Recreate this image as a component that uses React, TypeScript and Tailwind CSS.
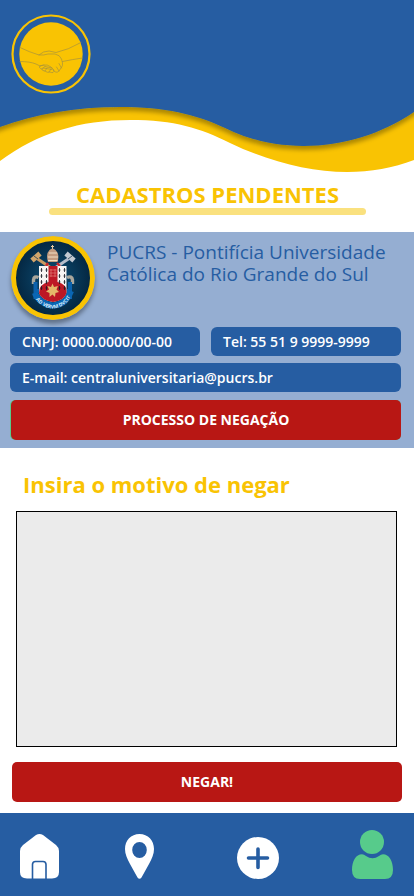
import React from 'react';

interface PillProps {
  children: React.ReactNode;
  className?: string;
}

const HandshakeLogo = () => (
  <svg viewBox="0 0 80 80" className="relative block h-20 w-20" fill="none" role="img" aria-label="Logo">
    <circle cx="40" cy="40" r="38.5" stroke="#f9c303" strokeWidth="2.2" />
    <circle cx="40" cy="40" r="31.7" fill="#f9c303" />
    <g stroke="#a8923c" strokeWidth="0.7" strokeLinecap="round" strokeLinejoin="round">
      <path d="M9 33.5 Q18 38 28 41 Q32 37 38 37 L45 38.5 Q57 36 70 28.5" />
      <path d="M9 47.5 Q19 47.5 25 50 L29 52" />
      <path d="M28 41 Q33 41.5 37 40 L44 40 Q49 41 50.5 45 L51.5 49 Q52 52 50 54 L48 57 Q45 60 42 56" />
      <path d="M51.5 47.5 Q61 45.5 71.5 44" />
      <path d="M29 52 Q27 54 31 55 Q31 57 34 57 Q36 59 39 58 Q43 60 43 56 L40 53 Q36 50 33 51 Z" />
      <path d="M31 55 L34 52.5 M34 57 L36 54 M38 58 L40 55 M48 57 L45.5 53 M50.5 54 L48 49.5 M33 51 L29 52" />
      <path d="M32 54 L41 55.5 M34 52.5 L41 54" />
    </g>
  </svg>
);

const Waves = () => (
  <svg
    viewBox="0 0 414 173"
    preserveAspectRatio="none"
    className="absolute inset-0 h-full w-full"
    aria-hidden="true"
  >
    <defs>
      <filter id="wave-shadow" x="-5%" y="-5%" width="110%" height="115%">
        <feDropShadow dx="0" dy="4" stdDeviation="2" floodColor="#000" floodOpacity="0.3" />
      </filter>
    </defs>
    <path
      d="M0 0 H414 V160 C360 181 295 174 230 143 C200 128 175 120 130 120 C80 120 38 133 0 161 Z"
      fill="#f9c303"
    />
    <path
      d="M-10 -10 H424 V105 L414 112 C360 149 285 158 225 128 C195 114 165 107 120 107 C75 107 35 114 0 127 L-10 131 Z"
      fill="#265da2"
      filter="url(#wave-shadow)"
    />
  </svg>
);

const Ermine = ({ x }: { x: number }) => (
  <g stroke="#1c1c24" strokeWidth="0.8">
    {[34, 40, 46, 52].map((y) => (
      <path key={y} d={`M${x} ${y - 2} V${y + 2} M${x - 1} ${y} H${x + 1} M${x + 5} ${y - 2} V${y + 2} M${x + 4} ${y} H${x + 6}`} />
    ))}
  </g>
);

const Crest = () => (
  <svg viewBox="0 0 84 84" className="block h-[84px] w-[84px] shrink-0 rounded-full shadow-[0_4px_4px_rgba(0,0,0,0.35)]" role="img" aria-label="Brasão da PUCRS">
    <defs>
      <radialGradient id="crest-bg">
        <stop offset="0" stopColor="#0c5078" />
        <stop offset="1" stopColor="#04253f" />
      </radialGradient>
      <clipPath id="crest-shield">
        <path d="M28 30 H55.5 V57 Q54 64 42 66 Q30 64 28 57 Z" />
      </clipPath>
      <path id="crest-motto" d="M22.5 58.5 Q24 63 28 67 Q42 78 55 67 Q60 62 61.5 56" />
    </defs>
    <circle cx="42" cy="42" r="39.5" fill="url(#crest-bg)" stroke="#f9c303" strokeWidth="5" />
    {/* keys */}
    <g fill="none">
      <path d="M26 22.5 L46 36" stroke="#c99a61" strokeWidth="3" />
      <path d="M21 24.5 L29 17.5" stroke="#d3a56b" strokeWidth="5" />
      <path d="M58 22.5 L38 36" stroke="#b5bdca" strokeWidth="3" />
      <path d="M55 17.5 L63 24.5" stroke="#c2c9d2" strokeWidth="5" />
      <path d="M23 20 L27 23 M61 20 L57 23" stroke="#1d3a51" strokeWidth="0.8" />
    </g>
    {/* tiara */}
    <path d="M37 26 Q34.5 18 38.5 14 Q41.5 11 44.5 14 Q49 18 46.5 26 Z" fill="#c49c80" />
    <path d="M41.5 9 V13 M40 10.5 H43" stroke="#e4c8a0" strokeWidth="1" />
    <path d="M38 17 H46 M37 21 H47 M37 24.5 H46.5" stroke="#f2dfc5" strokeWidth="1" />
    <path d="M37 27 L35 30 M46 27 L49 30" stroke="#c7282d" strokeWidth="2.4" />
    {/* supporters */}
    <g fill="none">
      <path d="M22.5 48 V44 Q23 39.5 27.5 41.5 M61.5 48 V44 Q61 39.5 56 41.5" stroke="#aaa79c" strokeWidth="3.4" />
      <path d="M24.5 46 V63 M59 46 V63" stroke="#0c62ad" strokeWidth="4" />
      <path d="M24 55 H28 M56 55 H60" stroke="#0c62ad" strokeWidth="4" />
    </g>
    <g clipPath="url(#crest-shield)">
      <path d="M28 30 H56 V67 H28 Z" fill="#f8f5f3" />
      <path d="M37.5 30 H46.5 V46 Q56 48 56 57 V67 H28 V57 Q28 48 37.5 46 Z" fill="#bd1825" />
      <Ermine x={30.5} />
      <Ermine x={48.5} />
      <path d="M38.5 34 H45.5 M38.5 37 H45.5 M38.5 40 H45.5 M40 33 V41 M44 33 V41" stroke="#df7370" strokeWidth="0.8" />
    </g>
    <path d="M41.5 47.5 L43 51 L47 50 L45.5 53.5 L48 56 L44.5 57 L44 61 L41.5 58.5 L38.5 61 L38.5 57 L35 55.5 L38 53.5 L36.5 50 L40 51 Z" fill="#e5b869" />
    <path d="M24 57 Q25 61 30 65 Q42 74 54 65 Q58 61 60 55" stroke="#0a66b4" strokeWidth="6" fill="none" />
    <text fontSize="5" fontWeight="700" fill="#d5eafa">
      <textPath href="#crest-motto" startOffset="50%" textAnchor="middle">AD VERVM DVCIT</textPath>
    </text>
  </svg>
);

const Pill = ({ children, className = '' }: PillProps) => (
  <p className={`rounded-md bg-[#265da2] pl-3 text-sm leading-[29px] font-semibold text-white ${className}`}>{children}</p>
);

const navItems = [
  {
    label: 'Início',
    className: '',
    icon: (
      <svg viewBox="0 0 39 45" className="block h-[45px] w-[39px]" fill="none">
        <path d="M16 1 Q19.5 -1 23 1 L36 11 Q39 13.5 39 17 V38 Q39 44.5 32 44.5 H7 Q0 44.5 0 38 V17 Q0 13.5 3 11 Z" fill="#fff" />
        <path d="M12.5 45 V30.5 Q12.5 27.5 15.5 27.5 H23 Q26 27.5 26 30.5 V45" stroke="#265da2" strokeWidth="1.6" />
      </svg>
    ),
  },
  {
    label: 'Mapa',
    className: 'mr-4',
    icon: (
      <svg viewBox="0 0 29 45" className="block h-[45px] w-[29px]">
        <path
          d="M14.5 0 C6 0 0 6.5 0 15 C0 20 2 24.5 5 30 L12.5 43.5 Q14.5 46 16.5 43.5 L24 30 C27 24.5 29 20 29 15 C29 6.5 23 0 14.5 0 Z M14.5 8 A7.3 8 0 1 1 14.5 24 A7.3 8 0 1 1 14.5 8 Z"
          fill="#fff"
          fillRule="evenodd"
        />
      </svg>
    ),
  },
  {
    label: 'Adicionar',
    className: 'mr-[7px]',
    icon: (
      <svg viewBox="0 0 42 42" className="block h-[42px] w-[42px]">
        <circle cx="21" cy="21" r="21" fill="#fff" />
        <path d="M21 12 V30.5 M11.5 21 H30.5" stroke="#265da2" strokeWidth="3.6" strokeLinecap="round" />
      </svg>
    ),
  },
  {
    label: 'Perfil',
    className: '',
    icon: (
      <svg viewBox="0 0 41 49" className="block h-[49px] w-[41px]" fill="#57cb8b">
        <circle cx="20" cy="12" r="12" />
        <path d="M10 24.3 Q12 24.3 14 26 Q20.5 30.5 27 26 Q29 24.3 31 24.3 C37 24.3 41 31 41 40 Q41 49 33 49 H8 Q0 49 0 40 C0 31 4 24.3 10 24.3 Z" />
      </svg>
    ),
  },
];

const App = () => {
  return (
    <div className="flex min-h-screen flex-col bg-white font-['Open_Sans',sans-serif]">
      <header className="relative h-[173px] pt-[14px] pl-[11px]">
        <Waves />
        <HandshakeLogo />
      </header>

      <main className="flex flex-1 flex-col">
        <div className="mt-[7px] mr-12 ml-[49px] flex flex-col items-center">
          <h1 className="text-[22px] leading-7 font-bold text-[#f9c303]">CADASTROS PENDENTES</h1>
          <div className="h-[7px] w-full rounded-full bg-[#fae17f]"></div>
        </div>

        <section className="mt-[17px] bg-[#95aed2] px-[10px] pt-1 pb-2">
          <div className="flex gap-3 pl-px">
            <Crest />
            <h2 className="pt-[5px] text-[19px] leading-[22px] text-[#265da2]">
              PUCRS - Pontifícia Universidade Católica do Rio Grande do Sul
            </h2>
          </div>
          <div className="mt-[7px] mr-[3px] grid grid-cols-2 gap-x-[11px] gap-y-[7px]">
            <Pill>CNPJ: 0000.0000/00-00</Pill>
            <Pill>Tel: 55 51 9 9999-9999</Pill>
            <Pill className="col-span-2">E-mail: centraluniversitaria@pucrs.br</Pill>
          </div>
          <div className="mt-2 mr-[3px] rounded-[5px] bg-[#57cb8b] pl-px">
            <button type="button" className="block h-10 w-full rounded-[5px] bg-[#b81714] text-sm font-bold text-white">
              PROCESSO DE NEGAÇÃO
            </button>
          </div>
        </section>

        <form className="flex flex-1 flex-col px-3 pt-5 pb-[11px]">
          <label htmlFor="motivo" className="pl-[11px] text-[22px] leading-8 font-bold text-[#f9c303]">
            Insira o motivo de negar
          </label>
          <textarea
            id="motivo"
            className="mt-[11px] mr-[5px] ml-1 min-h-[236px] flex-1 resize-none border border-black bg-[#ebebeb] p-2 outline-none"
          />
          <button type="button" className="mt-[15px] h-10 rounded-[5px] bg-[#b81714] text-sm font-bold text-white">
            NEGAR!
          </button>
        </form>
      </main>

      <nav className="flex h-[83px] items-end justify-between bg-[#265da2] pr-[21px] pb-[17px] pl-5">
        {navItems.map((item) => (
          <a key={item.label} href="#" aria-label={item.label} className={item.className}>
            {item.icon}
          </a>
        ))}
      </nav>
    </div>
  );
};

export default App;
